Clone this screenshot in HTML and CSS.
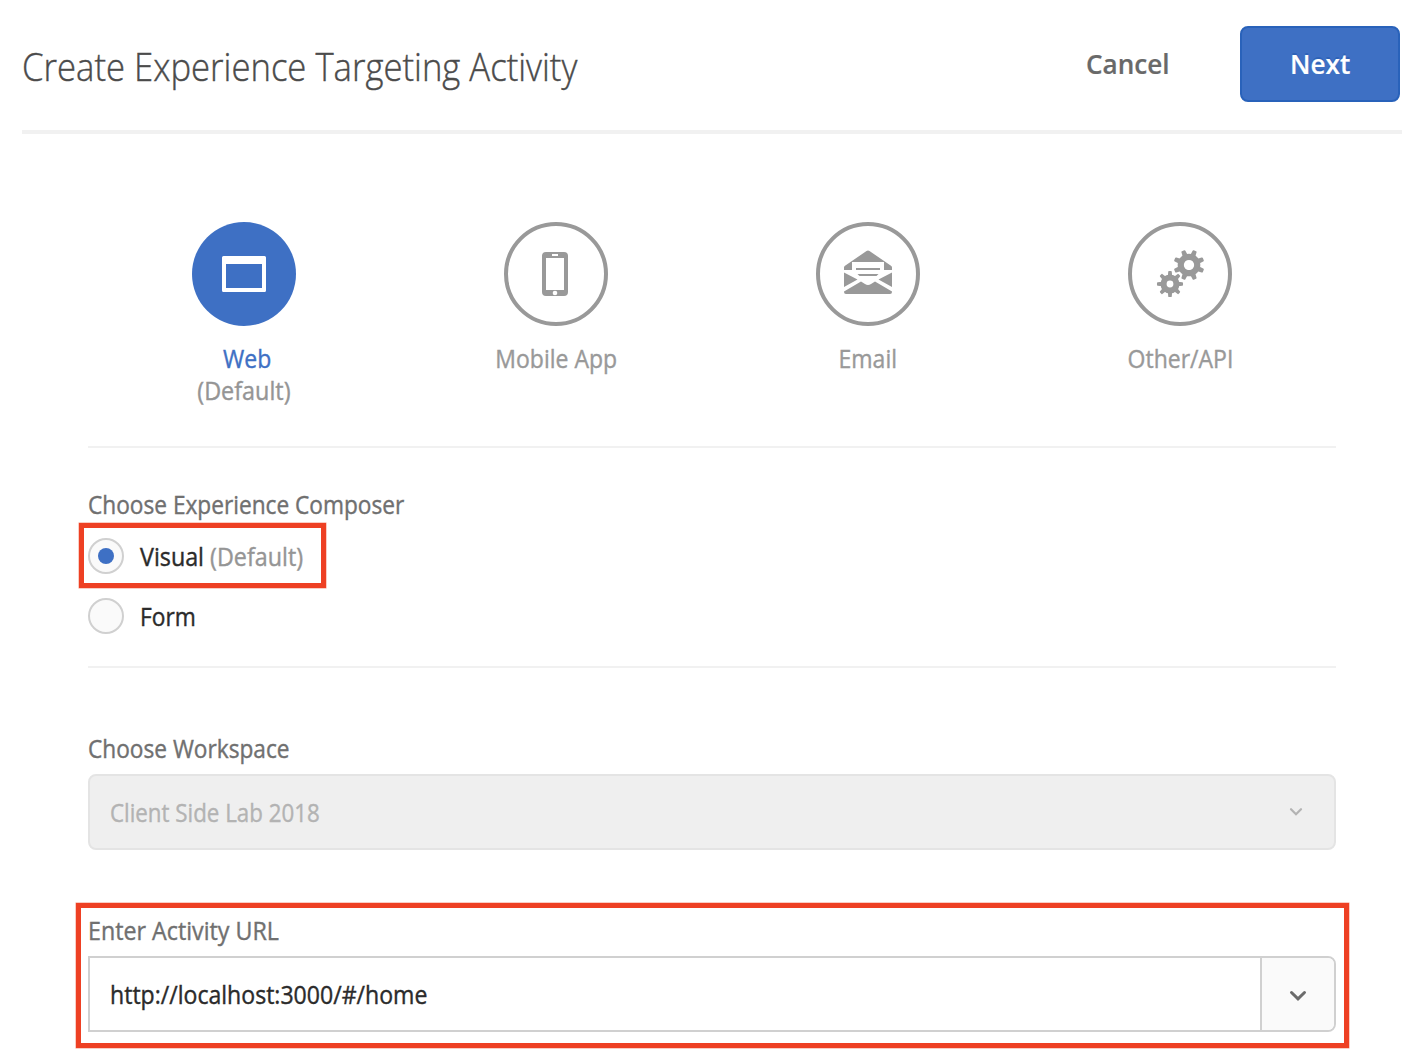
FILE: index.html
```html
<!DOCTYPE html>
<html lang="en">
<head>
<meta charset="utf-8">
<title>Create Experience Targeting Activity</title>
<link rel="stylesheet" href="styles.css">
</head>
<body>
<header class="header">
  <h1 class="title">Create Experience Targeting Activity</h1>
  <div class="actions">
    <button class="btn btn-quiet" type="button"><span class="btn-text">Cancel</span></button>
    <button class="btn btn-primary" type="button"><span class="btn-text">Next</span></button>
  </div>
</header>
<main class="content">
  <section class="types">
    <div class="type type-active">
      <div class="type-circle">
        <svg width="104" height="104" viewBox="0 0 104 104"><path fill="#fff" fill-rule="evenodd" d="M31.5 34h41q1.500 0 1.500 1.500v33q0 1.500-1.500 1.500h-41q-1.500 0-1.500-1.500v-33q0-1.500 1.500-1.500zM34 42v24h36V42z"/></svg>
      </div>
      <div class="type-name type-name-web">Web</div>
      <div class="type-name type-note">(Default)</div>
    </div>
    <div class="type">
      <div class="type-circle">
        <svg width="104" height="104" viewBox="0 0 104 104"><circle class="ring" cx="52" cy="52" r="50"/><path fill="#999" fill-rule="evenodd" d="M42 30h18q4 0 4 4v36q0 4-4 4H42q-4 0-4-4V34q0-4 4-4zM42 36v32h18V36zM48 32v2h6v-2z"/><circle cx="51" cy="71" r="2.300" fill="#fff"/></svg>
      </div>
      <div class="type-name">Mobile App</div>
    </div>
    <div class="type">
      <div class="type-circle">
        <svg width="104" height="104" viewBox="0 0 104 104"><circle class="ring" cx="52" cy="52" r="50"/><g fill="#999"><path d="M28 48V45.500Q28 44.500 29 43.800L50.500 29Q52 28 53.500 29L75 43.800Q76 44.500 76 45.500V48H68V40H36V48z"/><path d="M40 46h24v2H40zM41.500 52h21L60.500 54h-17z"/><path d="M28 50.500L41.500 57.500 28 65zM76 50.500L62.500 57.500 76 65z"/><path d="M28 69.500L45 59.500 49 62Q52 64 55 62L59 59.500 76 69.500V70Q76 72 74 72H30Q28 72 28 70z"/></g></svg>
      </div>
      <div class="type-name">Email</div>
    </div>
    <div class="type">
      <div class="type-circle">
        <svg width="104" height="104" viewBox="0 0 104 104">
          <defs>
            <path id="tooth" d="M-2.100-14.500Q-2.100-15.500-1.200-15.500H1.200Q2.100-15.500 2.100-14.500L2.600-9.500H-2.600z"/>
            <g id="cog"><circle r="8.200" fill="none" stroke="#999" stroke-width="6.200"/><g fill="#999"><use href="#tooth"/><use href="#tooth" transform="rotate(45)"/><use href="#tooth" transform="rotate(90)"/><use href="#tooth" transform="rotate(135)"/><use href="#tooth" transform="rotate(180)"/><use href="#tooth" transform="rotate(225)"/><use href="#tooth" transform="rotate(270)"/><use href="#tooth" transform="rotate(315)"/></g></g>
          </defs>
          <circle class="ring" cx="52" cy="52" r="50"/>
          <use href="#cog" transform="translate(61 43) rotate(22.500)"/>
          <circle cx="42" cy="62" r="10.500" fill="#fff"/>
          <use href="#cog" transform="translate(42 62) scale(.84)"/>
          <circle cx="42" cy="62" r="5.900" fill="none" stroke="#999" stroke-width="5"/>
        </svg>
      </div>
      <div class="type-name">Other/API</div>
    </div>
  </section>
  <section class="composer">
    <h2 class="label">Choose Experience Composer</h2>
    <label class="option option-marked"><span class="radio radio-on"></span><span class="option-text">Visual <span class="muted">(Default)</span></span></label>
    <label class="option"><span class="radio"></span><span class="option-text option-form">Form</span></label>
  </section>
  <section class="workspace">
    <h2 class="label">Choose Workspace</h2>
    <div class="select">
      <span class="select-value">Client Side Lab 2018</span>
      <svg width="14" height="10" viewBox="0 0 14 10"><path d="M2 2.200l5 5 5-5" fill="none" stroke="#b3b3b3" stroke-width="2.200" stroke-linecap="round"/></svg>
    </div>
  </section>
  <section class="url">
    <h2 class="label label-url">Enter Activity URL</h2>
    <div class="combo">
      <div class="combo-input"><span class="combo-value">http://localhost:3000/#/home</span></div>
      <div class="combo-toggle"><svg width="18" height="12" viewBox="0 0 18 12"><path d="M2.500 2.500L9 8.800l6.500-6.300" fill="none" stroke="#6b6b6b" stroke-width="3" stroke-linecap="round"/></svg></div>
    </div>
  </section>
</main>
</body>
</html>
```
FILE: styles.css
```css
*, *::before, *::after { box-sizing: border-box; }
body {
  margin: 0;
  height: 1058px;
  overflow: hidden;
  background: #fff;
  color: #2b2b2b;
  font: 400 25px/32px "Open Sans", sans-serif;
  white-space: nowrap;
}
svg { display: block; }
h1, h2 { margin: 0; }

/* Slightly narrowed lettering; --fit is the horizontal factor */
.title, .btn-text, .type-name, .label, .option-text, .select-value, .combo-value {
  display: inline-block;
  transform: scaleX(var(--fit));
  transform-origin: left center;
  -webkit-text-stroke: .4px currentColor;
}

.header {
  display: flex;
  justify-content: space-between;
  align-items: flex-start;
  width: 1380px;
  height: 134px;
  margin-left: 22px;
  padding: 26px 2px 0 0;
  border-bottom: 4px solid #f1f1f1;
}
.title {
  --fit: .912;
  padding-top: 2px;
  color: #4b4b4b;
  font-size: 38px;
  font-weight: 300;
  line-height: 76px;
}
.actions { display: flex; gap: 70px; }
.btn {
  height: 76px;
  padding: 0 0 1px;
  border: 0;
  background: none;
  font: 600 27px/74px "Open Sans", sans-serif;
}
.btn-text { --fit: .967; -webkit-text-stroke-width: .2px; }
.btn-quiet { width: 84px; color: #696969; text-align: left; }
.btn-primary {
  width: 160px;
  border: 2px solid #2962ba;
  border-radius: 8px;
  background: #3e70c4;
  color: #fff;
  line-height: 70px;
  text-shadow: 0 -2px 0 rgba(0, 60, 150, .25);
}
.btn-primary .btn-text { transform-origin: center; }

.content { width: 1248px; margin-left: 88px; }

.types {
  display: grid;
  grid-template-columns: repeat(4, 1fr);
  height: 314px;
  padding-top: 88px;
  border-bottom: 2px solid #f1f1f1;
}
.type {
  display: flex;
  flex-direction: column;
  align-items: center;
  color: #999;
}
.type-circle { margin-bottom: 16px; border-radius: 50%; }
.type-active .type-circle { background: #3e70c4; }
.ring { fill: none; stroke: #999; stroke-width: 4; }
.type-name { --fit: .92; transform-origin: center; }
.type-name-web { margin-left: 6px; color: #3e70c4; }
.type-note { --fit: .935; color: #959595; }

.label {
  --fit: .907;
  display: block;
  color: #707070;
  font-size: 25px;
  font-weight: 400;
  line-height: 32px;
}
.label-url { --fit: .93; }
.composer {
  height: 220px;
  padding-top: 40px;
  border-bottom: 2px solid #f1f1f1;
}
.option {
  position: relative;
  display: flex;
  align-items: center;
  gap: 16px;
  height: 36px;
  margin-top: 24px;
}
.label + .option { margin-top: 18px; }
.option-text { --fit: .932; }
.option-form { --fit: .91; }
.muted { color: #959595; }
.radio {
  display: grid;
  place-items: center;
  width: 36px;
  height: 36px;
  border: 2px solid #d0d0d0;
  border-radius: 50%;
  background: #fafafa;
}
.radio-on::after {
  content: "";
  width: 16px;
  height: 16px;
  border-radius: 50%;
  background: #3e70c4;
}
.option-marked::before,
.url::before {
  content: "";
  position: absolute;
  border: 5px solid #ee4023;
  box-shadow: 0 0 0 .5px #f59a89;
}
.option-marked::before { left: -9px; top: -15px; width: 247px; height: 65px; }
.url::before { left: -12px; right: -13px; top: -11px; bottom: -16px; }

.workspace { padding-top: 64px; }
.select {
  display: flex;
  align-items: center;
  justify-content: space-between;
  height: 76px;
  margin-top: 10px;
  padding: 0 31px 0 20px;
  border: 2px solid #e4e4e4;
  border-radius: 8px;
  background: #efefef;
  color: #b3b3b3;
}
.select-value { --fit: .893; }
.url { position: relative; margin-top: 64px; }
.combo {
  display: flex;
  height: 76px;
  margin-top: 10px;
  border: 2px solid #d0d0d0;
  border-radius: 0 8px 8px 0;
}
.combo-input { flex: 1; padding-left: 20px; line-height: 72px; }
.combo-value { --fit: .923; }
.combo-toggle {
  display: grid;
  place-items: center;
  width: 74px;
  padding-top: 3px;
  border-left: 2px solid #d0d0d0;
  border-radius: 0 6px 6px 0;
  background: #fafafa;
}
```
